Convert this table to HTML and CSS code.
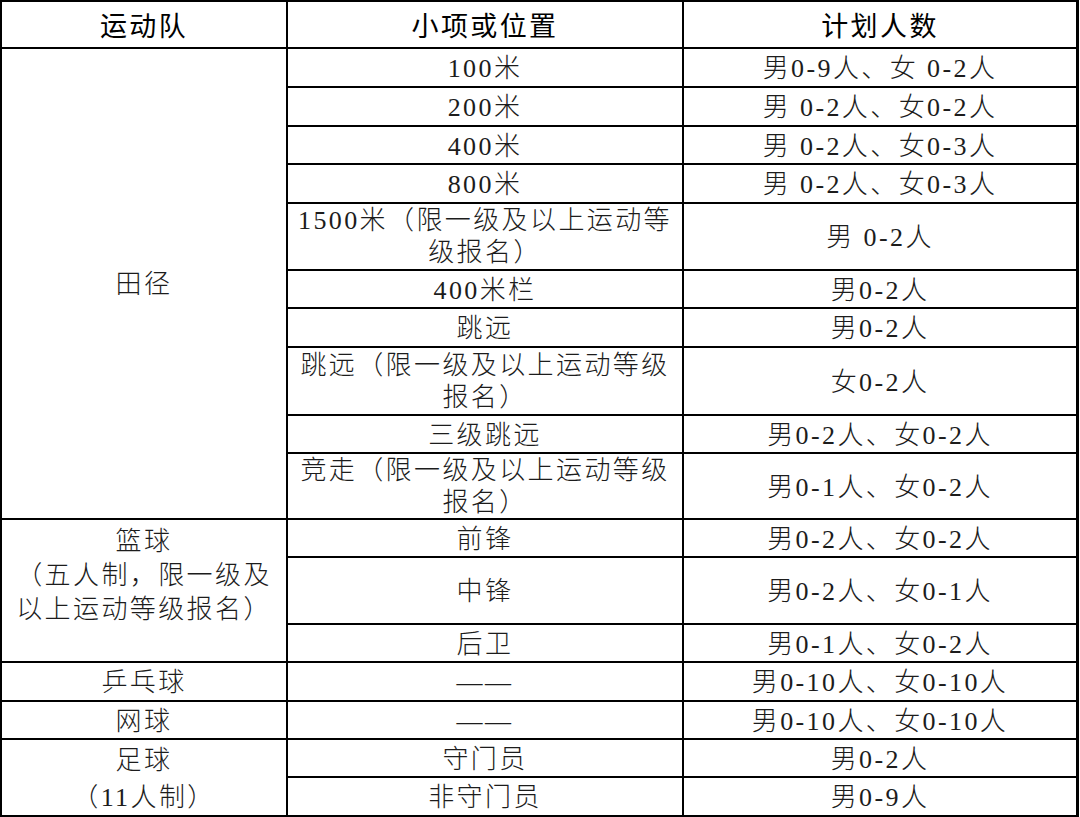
FILE: index.html
```html
<!DOCTYPE html>
<html lang="zh-CN">
<head>
<meta charset="utf-8">
<title>运动队计划人数</title>
<link rel="stylesheet" href="styles.css">
</head>
<body>
<div class="sheet">
  <div class="cell head">运动队</div>
  <div class="cell head">小项或位置</div>
  <div class="cell head">计划人数</div>

  <div class="cell team span-10">田径</div>
  <div class="cell">100米</div>
  <div class="cell">男0-9人、女 0-2人</div>
  <div class="cell">200米</div>
  <div class="cell">男 0-2人、女0-2人</div>
  <div class="cell">400米</div>
  <div class="cell">男 0-2人、女0-3人</div>
  <div class="cell">800米</div>
  <div class="cell">男 0-2人、女0-3人</div>
  <div class="cell multi">1500米（限一级及以上运动等<br>级报名）</div>
  <div class="cell">男 0-2人</div>
  <div class="cell">400米栏</div>
  <div class="cell">男0-2人</div>
  <div class="cell">跳远</div>
  <div class="cell">男0-2人</div>
  <div class="cell multi">跳远（限一级及以上运动等级<br>报名）</div>
  <div class="cell">女0-2人</div>
  <div class="cell">三级跳远</div>
  <div class="cell">男0-2人、女0-2人</div>
  <div class="cell multi">竞走（限一级及以上运动等级<br>报名）</div>
  <div class="cell">男0-1人、女0-2人</div>

  <div class="cell team basket span-3">篮球<br>（五人制，限一级及<br>以上运动等级报名）</div>
  <div class="cell">前锋</div>
  <div class="cell">男0-2人、女0-2人</div>
  <div class="cell">中锋</div>
  <div class="cell">男0-2人、女0-1人</div>
  <div class="cell">后卫</div>
  <div class="cell">男0-1人、女0-2人</div>

  <div class="cell team">乒乓球</div>
  <div class="cell">——</div>
  <div class="cell">男0-10人、女0-10人</div>

  <div class="cell team">网球</div>
  <div class="cell">——</div>
  <div class="cell">男0-10人、女0-10人</div>

  <div class="cell team football span-2">足球<br>（11人制）</div>
  <div class="cell">守门员</div>
  <div class="cell">男0-2人</div>
  <div class="cell">非守门员</div>
  <div class="cell">男0-9人</div>
</div>
</body>
</html>
```

FILE: styles.css
```css
html, body {
  margin: 0;
  padding: 0;
  background: #ffffff;
}

.sheet {
  display: grid;
  width: 1079px;
  box-sizing: border-box;
  padding: 2px 3px 2px 2px;
  gap: 2px;
  background: #000000;
  grid-template-columns: 284px 394px 392px;
  grid-template-rows: 45px 37px 37px 36px 37px 65px 36px 37px 66px 36px 64px 36px 65px 36px 37px 36px 36px 37px;
  font-family: "Liberation Serif", "Noto Sans CJK SC", serif;
  color: #1c1c1c;
}

.cell {
  background: #ffffff;
  display: flex;
  align-items: center;
  justify-content: center;
  text-align: center;
  font-size: 26px;
  letter-spacing: 2.4px;
  line-height: 32px;
  font-weight: 300;
  padding-top: 3px;
  box-sizing: border-box;
}

.head {
  font-family: "Noto Sans CJK SC", sans-serif;
  font-size: 27px;
  font-weight: 400;
  color: #000000;
  padding-top: 0;
}

.multi {
  line-height: 32px;
  padding-top: 1px;
}

.span-10 { grid-row: span 10; }
.span-3 { grid-row: span 3; }
.span-2 { grid-row: span 2; }

.basket {
  line-height: 34px;
  padding-top: 0;
  padding-bottom: 30px;
}

.football {
  line-height: 37px;
  padding-top: 2px;
}
```
